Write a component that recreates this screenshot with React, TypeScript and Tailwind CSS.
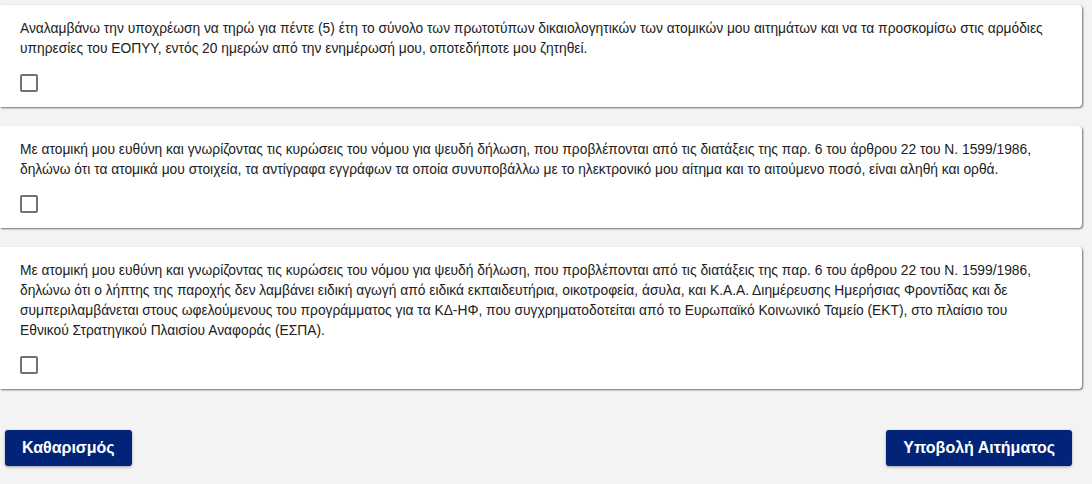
import React from "react";

const texts = [
  "Αναλαμβάνω την υποχρέωση να τηρώ για πέντε (5) έτη το σύνολο των πρωτοτύπων δικαιολογητικών των ατομικών μου αιτημάτων και να τα προσκομίσω στις αρμόδιες υπηρεσίες του ΕΟΠΥΥ, εντός 20 ημερών από την ενημέρωσή μου, οποτεδήποτε μου ζητηθεί.",
  "Με ατομική μου ευθύνη και γνωρίζοντας τις κυρώσεις του νόμου για ψευδή δήλωση, που προβλέπονται από τις διατάξεις της παρ. 6 του άρθρου 22 του Ν. 1599/1986, δηλώνω ότι τα ατομικά μου στοιχεία, τα αντίγραφα εγγράφων τα οποία συνυποβάλλω με το ηλεκτρονικό μου αίτημα και το αιτούμενο ποσό, είναι αληθή και ορθά.",
  "Με ατομική μου ευθύνη και γνωρίζοντας τις κυρώσεις του νόμου για ψευδή δήλωση, που προβλέπονται από τις διατάξεις της παρ. 6 του άρθρου 22 του Ν. 1599/1986, δηλώνω ότι ο λήπτης της παροχής δεν λαμβάνει ειδική αγωγή από ειδικά εκπαιδευτήρια, οικοτροφεία, άσυλα, και Κ.Α.Α. Διημέρευσης Ημερήσιας Φροντίδας και δε συμπεριλαμβάνεται στους ωφελούμενους του προγράμματος για τα ΚΔ-ΗΦ, που συγχρηματοδοτείται από το Ευρωπαϊκό Κοινωνικό Ταμείο (ΕΚΤ), στο πλαίσιο του Εθνικού Στρατηγικού Πλαισίου Αναφοράς (ΕΣΠΑ).",
];

export default function App() {
  return (
    <div
      className="w-[1092px] h-[484px] bg-[#f3f3f3] overflow-hidden pt-[5px]"
      style={{ fontFamily: "'Liberation Sans', Arial, sans-serif" }}
    >
      <div className="flex flex-col gap-[19px] w-[1082px]">
        {texts.map((t, i) => (
          <div
            key={i}
            className="bg-white rounded-r-[4px] shadow-[1px_1px_2px_rgba(0,0,0,0.55)] pl-[20px] pr-[25px] pt-[14px] pb-[15px]"
          >
            <p className="text-[13.8px] leading-[20px] text-[#212121]">{t}</p>
            <div className="mt-[15px] w-[18px] h-[18px] border-2 border-[#727272] rounded-[2px]" />
          </div>
        ))}
      </div>
      <div className="flex justify-between w-[1072px] pl-[5px] mt-[41px]">
        <button className="h-[36px] px-[17px] bg-[#012479] text-white font-bold text-[16px] rounded-[3px] shadow-[0_1px_3px_rgba(0,0,0,0.35)]">
          Καθαρισμός
        </button>
        <button className="h-[36px] px-[17px] bg-[#012479] text-white font-bold text-[16px] rounded-[3px] shadow-[0_1px_3px_rgba(0,0,0,0.35)]">
          Υποβολή Αιτήματος
        </button>
      </div>
    </div>
  );
}
